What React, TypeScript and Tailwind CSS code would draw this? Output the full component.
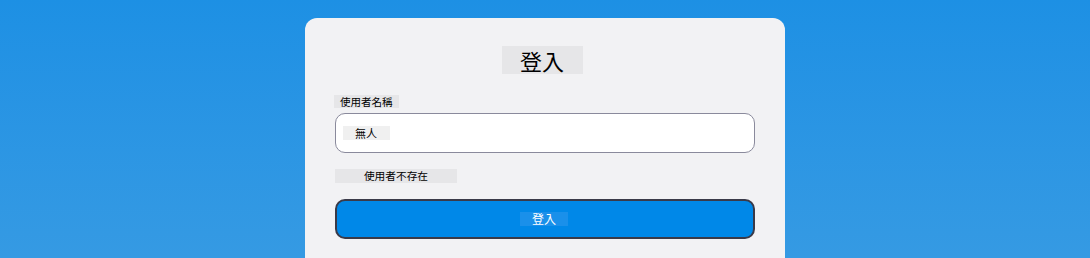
export default function App() {
  return (
    <div className="w-full h-[258px] overflow-hidden bg-gradient-to-b from-[#1d90e4] to-[#359ae3] flex justify-center pt-[18px] font-['Noto_Sans_CJK_TC','Noto_Sans',sans-serif]">
      <div className="w-[480px] h-[300px] rounded-[12px] bg-[#f2f2f4] px-[30px] pt-[28px] flex flex-col">
        <div className="flex justify-center pr-[6px]">
          <h1 className="bg-[#e6e6e8] h-[28px] w-[81px] text-center text-[22px] leading-[28px] text-black">登入</h1>
        </div>

        <label className="mt-[21px] ml-[-1px] self-start bg-[#e6e6e8] h-[13px] px-[6px] text-[10.5px] leading-[13px] text-black">
          使用者名稱
        </label>

        <div className="mt-[5px] h-[40px] rounded-[10px] border border-[#8a8a9c] bg-white flex items-center px-[7px]">
          <span className="bg-[#f0f0f0] h-[14px] w-[47px] pl-[12px] text-[11px] leading-[14px] text-black">無人</span>
        </div>

        <p className="mt-[16px] self-start bg-[#e6e6e8] h-[14px] w-[122px] text-center text-[10.7px] leading-[14px] text-black">
          使用者不存在
        </p>

        <button className="mt-[16px] h-[40px] rounded-[10px] border-2 border-[#3a3a48] bg-[#0088e8] flex items-center justify-center pr-[2px]">
          <span className="bg-[#1a90ea] h-[14px] w-[48px] text-center text-[12px] leading-[14px] text-white">登入</span>
        </button>
      </div>
    </div>
  );
}
